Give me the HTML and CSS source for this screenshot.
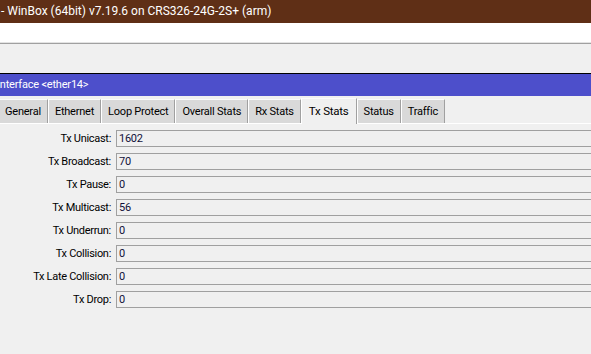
FILE: index.html
```html
<!DOCTYPE html>
<html>
<head>
	<title>WinBox</title>
<link rel="stylesheet" href="styles.css">
</head>
<body>

<div class="appTitle">- WinBox (64bit) v7.19.6 on CRS326-24G-2S+ (arm)</div>
<div class="appMenu"></div>
<div class="appToolbar"></div>

<div class="win">
	<div class="winTitle">Interface &lt;ether14&gt;</div>
	<div class="tabsetTabs">
		<span class="tab tabFirst">General</span>
		<span class="tab">Ethernet</span>
		<span class="tab">Loop Protect</span>
		<span class="tab">Overall Stats</span>
		<span class="tab">Rx Stats</span>
		<span class="tab tabActive">Tx Stats</span>
		<span class="tab">Status</span>
		<span class="tab">Traffic</span>
	</div>
	<div class="form">
		<label>Tx Unicast:</label><div class="field">1602</div>
		<label>Tx Broadcast:</label><div class="field">70</div>
		<label>Tx Pause:</label><div class="field">0</div>
		<label>Tx Multicast:</label><div class="field">56</div>
		<label>Tx Underrun:</label><div class="field">0</div>
		<label>Tx Collision:</label><div class="field">0</div>
		<label>Tx Late Collision:</label><div class="field">0</div>
		<label>Tx Drop:</label><div class="field">0</div>
	</div>
</div>

</body>
</html>
```

FILE: styles.css
```css
body {
	margin: 0;
	background-color: #f0f0f0;
	font-family: Roboto, "Liberation Sans", sans-serif;
	font-size: 11px;
	letter-spacing: -0.3px;
	color: #000;
	overflow: hidden;
}
.appTitle {
	height: 23px;
	line-height: 22px;
	background-color: #5f2f16;
	color: #fff;
	font-size: 12px;
	letter-spacing: 0;
	padding-left: 1px;
	white-space: nowrap;
}
.appMenu {
	height: 19px;
	background-color: #fff;
	border-bottom: 1px solid #e3e3e3;
}
.appToolbar {
	height: 29px;
	border-top: 1px solid #a0a0a0;
	border-bottom: 1px solid #000;
}
.win {
	margin-left: -6px;
}
.winTitle {
	height: 22px;
	line-height: 21px;
	background-color: #4d4fcb;
	color: #fff;
	font-size: 11px;
	letter-spacing: -0.2px;
	padding-left: 3px;
}
.tabsetTabs {
	display: flex;
	margin-top: 3px;
	height: 24px;
	border-bottom: 1px solid #fff;
}
.tab {
	background-color: #d9d9d9;
	border-top: 1px solid #fbfbfb;
	border-left: 1px solid #fff;
	border-right: 1px solid #a0a0a0;
	padding: 0 6px;
	line-height: 23px;
	letter-spacing: -0.22px;
	white-space: nowrap;
}
.tabFirst {
	padding-left: 10px;
}
.tabActive {
	background-color: #f0f0f0;
	margin-top: -1px;
	height: 25px;
	line-height: 24px;
	position: relative;
	z-index: 1;
	font-size: 11.5px;
	padding: 0 7px;
}
.form {
	display: grid;
	grid-template-columns: 118px 1fr;
	column-gap: 4px;
	row-gap: 6px;
	padding-top: 6px;
	margin-right: -20px;
}
.form label {
	text-align: right;
	line-height: 17px;
	padding-right: 1px;
}
.field {
	height: 15px;
	line-height: 15px;
	border: 1px solid #a0a0a0;
	padding-left: 2px;
	color: #10103a;
}
```
